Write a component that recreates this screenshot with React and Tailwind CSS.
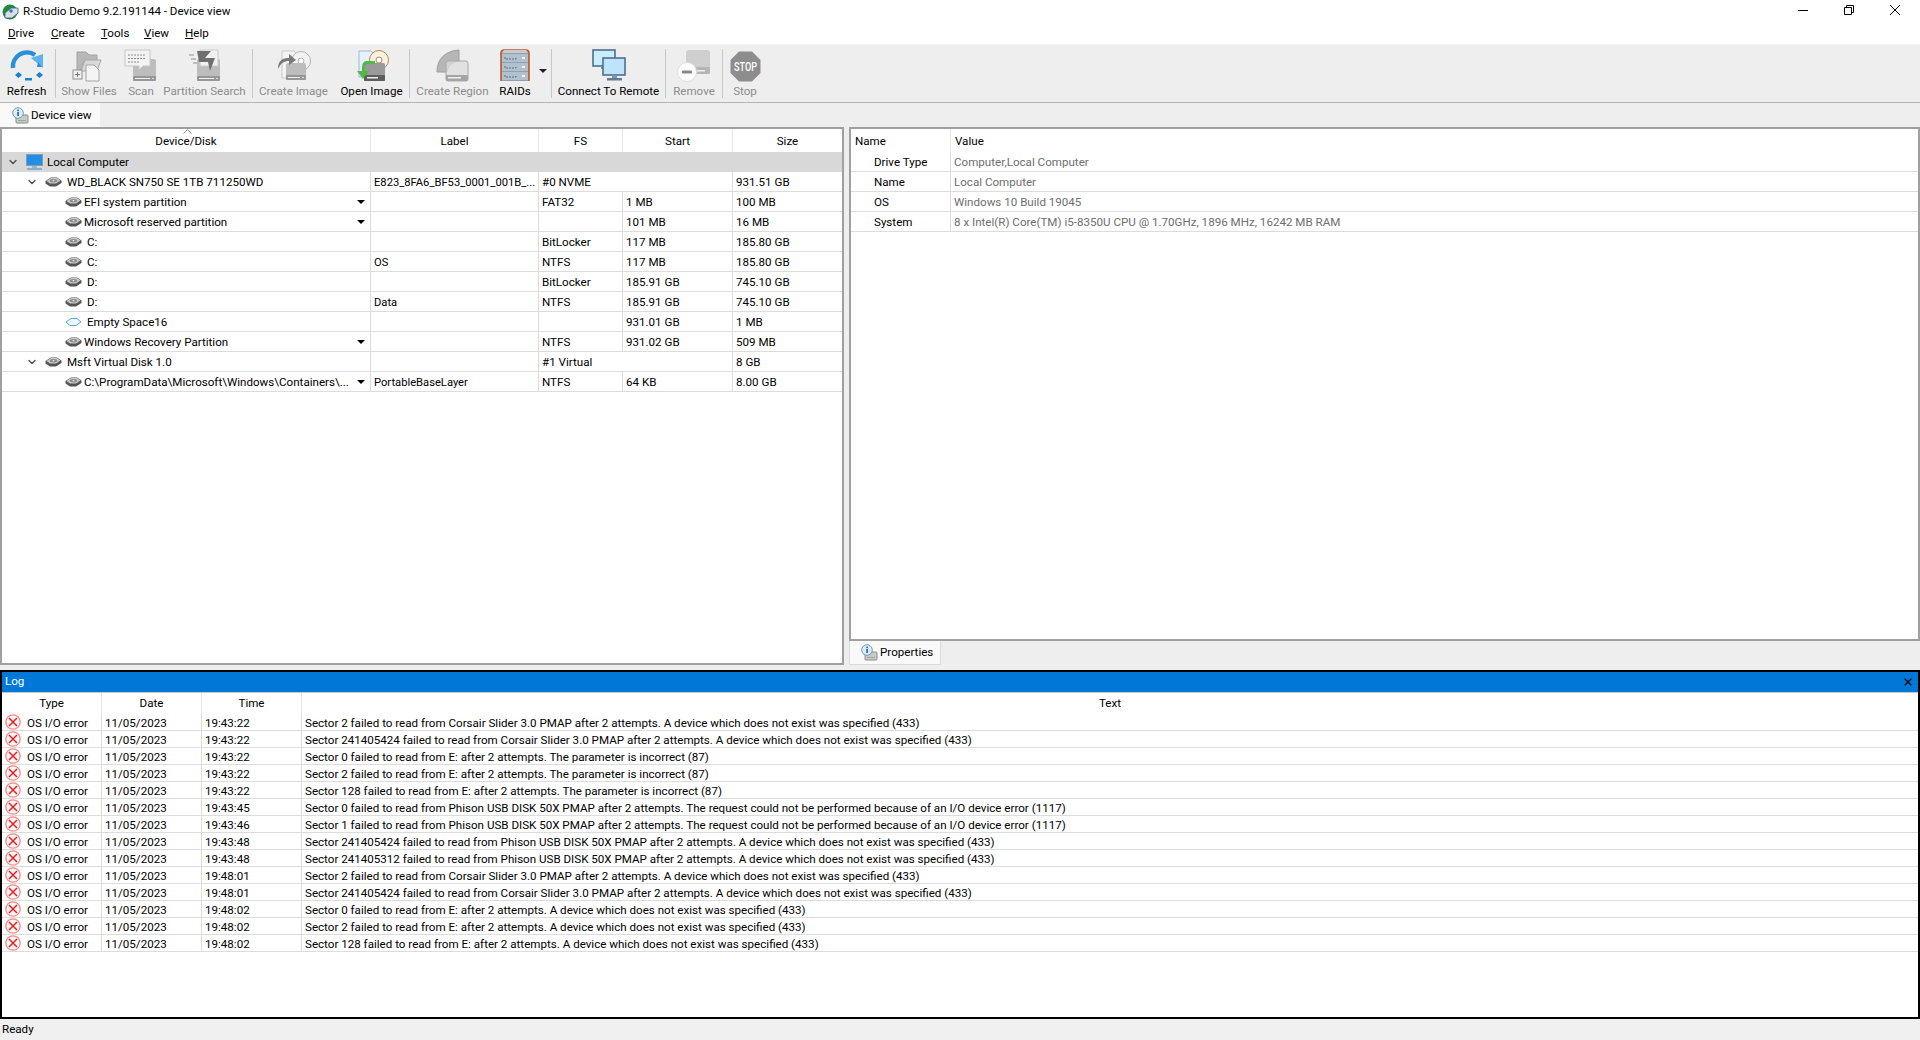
import { ChevronDown, X } from "lucide-react";

const disks = [
  { level: 1, name: "WD_BLACK SN750 SE 1TB 711250WD", label: "E823_8FA6_BF53_0001_001B_...", fs: "#0 NVME", size: "931.51 GB", span: true },
  { level: 2, name: "EFI system partition", fs: "FAT32", start: "1 MB", size: "100 MB", menu: true },
  { level: 2, name: "Microsoft reserved partition", start: "101 MB", size: "16 MB", menu: true },
  { level: 2, name: "C:", fs: "BitLocker", start: "117 MB", size: "185.80 GB", pad: true },
  { level: 2, name: "C:", label: "OS", fs: "NTFS", start: "117 MB", size: "185.80 GB", pad: true },
  { level: 2, name: "D:", fs: "BitLocker", start: "185.91 GB", size: "745.10 GB", pad: true },
  { level: 2, name: "D:", label: "Data", fs: "NTFS", start: "185.91 GB", size: "745.10 GB", pad: true },
  { level: 2, name: "Empty Space16", start: "931.01 GB", size: "1 MB", pad: true, empty: true },
  { level: 2, name: "Windows Recovery Partition", fs: "NTFS", start: "931.02 GB", size: "509 MB", menu: true },
  { level: 1, name: "Msft Virtual Disk 1.0", fs: "#1 Virtual", size: "8 GB", span: true },
  { level: 2, name: "C:\\ProgramData\\Microsoft\\Windows\\Containers\\...", label: "PortableBaseLayer", fs: "NTFS", start: "64 KB", size: "8.00 GB", menu: true },
];

const properties = [
  ["Drive Type", "Computer,Local Computer"],
  ["Name", "Local Computer"],
  ["OS", "Windows 10 Build 19045"],
  ["System", "8 x Intel(R) Core(TM) i5-8350U CPU @ 1.70GHz, 1896 MHz, 16242 MB RAM"],
];

const logRows = [
  ["19:43:22", "Sector 2 failed to read from Corsair Slider 3.0 PMAP after 2 attempts. A device which does not exist was specified (433)"],
  ["19:43:22", "Sector 241405424 failed to read from Corsair Slider 3.0 PMAP after 2 attempts. A device which does not exist was specified (433)"],
  ["19:43:22", "Sector 0 failed to read from E: after 2 attempts. The parameter is incorrect (87)"],
  ["19:43:22", "Sector 2 failed to read from E: after 2 attempts. The parameter is incorrect (87)"],
  ["19:43:22", "Sector 128 failed to read from E: after 2 attempts. The parameter is incorrect (87)"],
  ["19:43:45", "Sector 0 failed to read from Phison USB DISK 50X PMAP after 2 attempts. The request could not be performed because of an I/O device error (1117)"],
  ["19:43:46", "Sector 1 failed to read from Phison USB DISK 50X PMAP after 2 attempts. The request could not be performed because of an I/O device error (1117)"],
  ["19:43:48", "Sector 241405424 failed to read from Phison USB DISK 50X PMAP after 2 attempts. A device which does not exist was specified (433)"],
  ["19:43:48", "Sector 241405312 failed to read from Phison USB DISK 50X PMAP after 2 attempts. A device which does not exist was specified (433)"],
  ["19:48:01", "Sector 2 failed to read from Corsair Slider 3.0 PMAP after 2 attempts. A device which does not exist was specified (433)"],
  ["19:48:01", "Sector 241405424 failed to read from Corsair Slider 3.0 PMAP after 2 attempts. A device which does not exist was specified (433)"],
  ["19:48:02", "Sector 0 failed to read from E: after 2 attempts. A device which does not exist was specified (433)"],
  ["19:48:02", "Sector 2 failed to read from E: after 2 attempts. A device which does not exist was specified (433)"],
  ["19:48:02", "Sector 128 failed to read from E: after 2 attempts. A device which does not exist was specified (433)"],
];

function DiskIcon({ empty }) {
  if (empty) {
    return (
      <svg width="17" height="10" viewBox="0 0 17 10" className="shrink-0">
        <path d="M1 5 L6 1.5 H12 L16 5 L11 8.5 H5 Z" fill="#eef8ff" stroke="#5aa9e6" strokeWidth="1" />
      </svg>
    );
  }
  return (
    <svg width="17" height="10" viewBox="0 0 17 10" className="shrink-0">
      <path d="M0.5 4 L6 0.5 H12 L16.5 3.5 V6 L11 9.5 H5 L0.5 6.5 Z" fill="#555555" />
      <path d="M1.5 4 L6 1 H12 L15.5 3.5 L11 6.5 H5 Z" fill="#c9c9c9" />
      <ellipse cx="8.5" cy="3.7" rx="3.8" ry="1.7" fill="#8c8c8c" />
      <ellipse cx="8.5" cy="3.7" rx="1" ry="0.6" fill="#eeeeee" />
    </svg>
  );
}

function MonitorIcon() {
  return (
    <svg width="17" height="17" viewBox="0 0 17 17" className="shrink-0">
      <rect x="0.5" y="0.5" width="16" height="11" fill="#1e90e8" stroke="#8a9aa8" />
      <rect x="6" y="12" width="5" height="2" fill="#9db4c4" />
      <rect x="1" y="14" width="15" height="2" fill="#7fb2d8" />
    </svg>
  );
}

function ErrorIcon() {
  return (
    <svg width="16" height="16" viewBox="0 0 16 16" className="shrink-0">
      <circle cx="8" cy="8" r="7.2" fill="#fff5f5" stroke="#f08a8a" strokeWidth="1.3" />
      <path d="M4 4 L12 12 M12 4 L4 12" stroke="#e02020" strokeWidth="1.5" />
    </svg>
  );
}

function InfoTabIcon() {
  return (
    <svg width="17" height="17" viewBox="0 0 17 17" className="shrink-0">
      <rect x="4" y="8" width="12" height="8" rx="1" fill="#c8cbc8" stroke="#8b8f8b" />
      <rect x="6" y="13" width="8" height="1" fill="#8fb08f" />
      <circle cx="6" cy="6" r="5.3" fill="#dcecf8" stroke="#6d9cc4" />
      <rect x="5.2" y="5" width="1.8" height="4" fill="#3d6f9c" />
      <rect x="5.2" y="2.6" width="1.8" height="1.6" fill="#3d6f9c" />
    </svg>
  );
}

function AppIcon() {
  return (
    <svg width="17" height="16" viewBox="0 0 17 16" className="shrink-0">
      <circle cx="8" cy="8" r="7.5" fill="#1f8a3c" />
      <path d="M3 9 L9 4 H16 V9 L10 14 H3 Z" fill="#d9dfe6" stroke="#3b5f86" strokeWidth="0.8" />
      <circle cx="9" cy="7" r="1.8" fill="#3a78b8" />
    </svg>
  );
}

function BigDisk({ x = 10, y = 14, w = 22, h = 16 }) {
  return (
    <g>
      <rect x={x} y={y} width={w} height={h} rx="2" fill="#bdbdbd" />
      <rect x={x} y={y + h - 5} width={w} height="5" rx="1" fill="#979797" />
      <rect x={x + 2} y={y + h - 3} width={w - 8} height="1" fill="#eeeeee" />
      <rect x={x + w - 4} y={y + h - 3} width="2" height="1" fill="#e0e0e0" />
    </g>
  );
}

function RefreshIcon() {
  return (
    <svg width="34" height="34" viewBox="0 0 34 34">
      <path d="M3 19 A14 14 0 0 1 25 6" fill="none" stroke="#2a8fd8" strokeWidth="4.5" />
      <path d="M21 9 L33 5 L33 19 Z" fill="#5cb4ea" />
      <path d="M28 13 L32 18 L27 18 Z" fill="#2a8fd8" />
      <path d="M5 26 L8.5 23 L12 26 L8.5 29 Z M26 26 L29.5 23 L33 26 L29.5 29 Z" fill="#1783d0" />
      <rect x="15" y="29" width="7" height="2.5" fill="#1783d0" />
    </svg>
  );
}

function ShowFilesIcon() {
  return (
    <svg width="34" height="34" viewBox="0 0 34 34">
      <path d="M5 3 H14 L17 6 H25 V12 H12 L8 22 H5 Z" fill="#b8b8b8" stroke="#a2a2a2" />
      <path d="M9 22 L13 11 H29 L25 22 Z" fill="#d9d9d9" stroke="#a8a8a8" />
      <rect x="1" y="21" width="9" height="9" fill="#f1f1f1" stroke="#909090" />
      <path d="M3 25.5 H8 M5.5 23 V28" stroke="#777" />
      <path d="M14 16 H22 L27 21 V32 H14 Z" fill="#f4f4f4" stroke="#a4a4a4" />
    </svg>
  );
}

function ScanIcon() {
  return (
    <svg width="34" height="34" viewBox="0 0 34 34">
      <BigDisk x={9} y={10} w={23} h={22} />
      <path d="M1 1 H26 V17 H19 L15 21 L15 17 H1 Z" fill="#f3f3f3" stroke="#c6c6c6" />
      <path d="M4 6 H22 M4 9.5 H22 M4 13 H16" stroke="#8c8c8c" strokeDasharray="2 1" />
    </svg>
  );
}

function PartitionSearchIcon() {
  return (
    <svg width="34" height="34" viewBox="0 0 34 34">
      <BigDisk x={9} y={10} w={23} h={22} />
      <path d="M12 1 H30 V17 H12 Z" fill="#f1f1f1" stroke="#cacaca" />
      <path d="M9 2 H23 L17 9 H27 L22 22 L20 13 H11 Z" fill="#6f6f6f" />
      <path d="M1 6 H6 M3 10 H8 M5 14 H9" stroke="#8c8c8c" />
    </svg>
  );
}

function CreateImageIcon() {
  return (
    <svg width="34" height="34" viewBox="0 0 34 34">
      <path d="M5 2 H17 L20 5 V29 H5 Z" fill="#f4f4f4" stroke="#c9c9c9" />
      <circle cx="24" cy="12" r="9.5" fill="#f3f3f3" stroke="#b4b4b4" />
      <circle cx="24" cy="12" r="3" fill="#fff" stroke="#b4b4b4" />
      <BigDisk x={9} y={14} w={20} h={17} />
      <path d="M1 20 C1 11 6 9 12 9 V5 L19 11 L12 16 V12 C7 12 4 14 1 20 Z" fill="#7a7a7a" />
    </svg>
  );
}

function OpenImageIcon() {
  return (
    <svg width="34" height="34" viewBox="0 0 34 34">
      <path d="M4 2 H16 L20 6 V28 H4 Z" fill="#e7f1fb" stroke="#9bbcdc" />
      <circle cx="24" cy="11" r="9.5" fill="#f8f1e2" stroke="#b08b4f" />
      <circle cx="24" cy="11" r="3" fill="#fff" stroke="#b08b4f" />
      <rect x="9" y="14" width="21" height="18" rx="2" fill="#9a9a9a" />
      <rect x="9" y="26" width="21" height="6" rx="1" fill="#5d5d5d" />
      <rect x="12" y="28" width="11" height="1.5" fill="#eeeeee" />
      <path d="M20 12 H12 C8 12 7 15 7 20 V22 H2 L8 30 L14 22 H10 V19 C10 16 11 15 13 15 H20 Z" fill="#53b848" />
    </svg>
  );
}

function CreateRegionIcon() {
  return (
    <svg width="34" height="34" viewBox="0 0 34 34">
      <path d="M1 23 C1 10 9 2 23 1 V12 C16 13 12 17 11 23 Z" fill="#b6b6b6" stroke="#9e9e9e" />
      <rect x="10" y="12" width="22" height="20" rx="2" fill="#dcdcdc" stroke="#aaaaaa" fillOpacity="0.75" />
      <rect x="10" y="26" width="22" height="6" rx="1" fill="#a5a5a5" />
      <rect x="12" y="28" width="13" height="1.5" fill="#eeeeee" />
    </svg>
  );
}

function RaidsIcon() {
  return (
    <svg width="30" height="34" viewBox="0 0 30 34">
      <path d="M1 32 V4 Q1 1 4 1 H26 Q29 1 29 4 V32" fill="#8fa0b2" stroke="#c05a2e" strokeWidth="1.6" />
      <path d="M4 1 H26 L28 4 H2 Z" fill="#c8ccd0" />
      {[5, 14, 23].map((y) => (
        <g key={y}>
          <rect x="2" y={y} width="26" height="8" fill="#b3c1cf" />
          <path d={`M5 ${y + 3} V${y + 5} H16 V${y + 3}`} fill="none" stroke="#51657a" strokeWidth="0.9" strokeDasharray="2 1" />
          <rect x="22" y={y + 3} width="3" height="2" fill="#eef2f5" />
        </g>
      ))}
    </svg>
  );
}

function RemoteIcon() {
  return (
    <svg width="34" height="34" viewBox="0 0 34 34">
      <rect x="1" y="1" width="22" height="16" fill="#c8eeff" stroke="#4f6f8f" strokeWidth="1.6" />
      <rect x="9" y="17" width="5" height="3" fill="#7a93ab" />
      <rect x="11" y="9" width="22" height="17" fill="#bde4fb" stroke="#4f6f8f" strokeWidth="1.6" />
      <rect x="20" y="26" width="5" height="3" fill="#7a93ab" />
      <rect x="15" y="29" width="15" height="2.5" fill="#5f7c98" />
    </svg>
  );
}

function RemoveIcon() {
  return (
    <svg width="34" height="34" viewBox="0 0 34 34">
      <rect x="9" y="1" width="24" height="24" rx="3" fill="#cfcfcf" />
      <rect x="9" y="18" width="24" height="7" rx="1" fill="#b5b5b5" />
      <rect x="20" y="21" width="8" height="1.5" fill="#eeeeee" />
      <circle cx="10" cy="23" r="9.5" fill="#ffffff" stroke="#dddddd" />
      <rect x="5" y="21.5" width="10" height="3" rx="1" fill="#888888" />
    </svg>
  );
}

function StopIcon() {
  return (
    <svg width="31" height="31" viewBox="0 0 31 31" className="overflow-visible">
      <path d="M9 0.5 H22 L30.5 9 V22 L22 30.5 H9 L0.5 22 V9 Z" fill="#8d8d8d" />
      <text x="15.5" y="20" textAnchor="middle" fontSize="13" fontWeight="500" fill="#ffffff" fontFamily="Roboto, sans-serif" textLength="23" lengthAdjust="spacingAndGlyphs">STOP</text>
    </svg>
  );
}

const tools = [
  { name: "Refresh", w: "w-[55px] pr-[2px]", icon: <RefreshIcon />, on: true },
  { sep: true },
  { name: "Show Files", w: "w-[66px]", icon: <ShowFilesIcon /> },
  { name: "Scan", w: "w-[38px]", icon: <ScanIcon /> },
  { name: "Partition Search", w: "w-[92px] pr-[3px]", icon: <PartitionSearchIcon /> },
  { sep: true },
  { name: "Create Image", w: "w-[81px]", icon: <CreateImageIcon /> },
  { name: "Open Image", w: "w-[75px]", icon: <OpenImageIcon />, on: true },
  { sep: true },
  { name: "Create Region", w: "w-[85px]", icon: <CreateRegionIcon /> },
  { name: "RAIDs", w: "w-[40px]", icon: <RaidsIcon />, on: true },
  { arrow: true },
  { sep: true },
  { name: "Connect To Remote", w: "w-[113px]", icon: <RemoteIcon />, on: true },
  { sep: true },
  { name: "Remove", w: "w-[56px]", icon: <RemoveIcon /> },
  { sep: true },
  { name: "Stop", w: "w-[44px]", icon: <StopIcon /> },
];

function Toolbar() {
  return (
    <div className="flex h-[59px] items-stretch border-t border-t-[#f5f5f5] border-b border-b-[#b4b4b4] bg-[#eeeeee] pt-[4px] pb-[4px]">
      {tools.map((tool, i) => {
        if (tool.sep) return <div key={i} className="w-px shrink-0 bg-[#c8c8c8]" />;
        if (tool.arrow) {
          return (
            <div key={i} className="flex w-[16px] shrink-0 items-start justify-center pt-[20px]">
              <div className="h-0 w-0 border-x-[4px] border-t-[4px] border-x-transparent border-t-[#222222]" />
            </div>
          );
        }
        return (
          <div key={i} className={`flex shrink-0 flex-col items-center justify-between ${tool.w} ${tool.on ? "text-black" : "text-[#8c8c8c]"}`}>
            <div className="flex h-[34px] items-center justify-center">{tool.icon}</div>
            <span className="whitespace-nowrap leading-[14px]">{tool.name}</span>
          </div>
        );
      })}
    </div>
  );
}

function DiskRow({ row }) {
  const indent = row.level === 1 ? "pl-[24px]" : "pl-[63px]";
  const textPad = row.pad ? "ml-[5px]" : "ml-[2px]";
  return (
    <div className="flex h-[20px] items-center border-b border-[#dcdcdc]">
      <div className={`relative flex h-full w-[369px] shrink-0 items-center border-r border-[#dcdcdc] ${indent}`}>
        {row.level === 1 && <ChevronDown size={12} strokeWidth={2.6} className="mr-[7px] shrink-0 text-[#4a4a4a]" />}
        <DiskIcon empty={row.empty} />
        <span className={`whitespace-nowrap pt-[2px] ${row.level === 1 ? "ml-[5px]" : textPad}`}>{row.name}</span>
        {row.menu && <div className="absolute right-[5px] top-[8px] h-0 w-0 border-x-[4px] border-t-[4px] border-x-transparent border-t-black" />}
      </div>
      <div className="h-full w-[168px] shrink-0 whitespace-nowrap border-r border-[#dcdcdc] pl-[3px] text-[11.2px] leading-[21px]">{row.label}</div>
      {row.span ? (
        <div className="h-full w-[194px] shrink-0 border-r border-[#dcdcdc] pl-[3px] leading-[21px]">{row.fs}</div>
      ) : (
        <>
          <div className="h-full w-[84px] shrink-0 border-r border-[#dcdcdc] pl-[3px] leading-[21px]">{row.fs}</div>
          <div className="h-full w-[110px] shrink-0 border-r border-[#dcdcdc] pl-[3px] leading-[21px]">{row.start}</div>
        </>
      )}
      <div className="h-full flex-1 pl-[3px] leading-[21px]">{row.size}</div>
    </div>
  );
}

function DevicePanel() {
  return (
    <div className="h-[538px] w-[844px] shrink-0 border-2 border-[#a0a0a0] bg-white">
      <div className="relative flex h-[23px] items-center text-center">
        <svg width="9" height="5" viewBox="0 0 9 5" className="absolute left-[181px] top-[0px]">
          <path d="M0.5 4.5 L4.5 0.5 L8.5 4.5" fill="none" stroke="#8a8a8a" />
        </svg>
        <div className="h-full w-[369px] shrink-0 border-r border-[#e6e6e6] leading-[25px]">Device/Disk</div>
        <div className="h-full w-[168px] shrink-0 border-r border-[#e6e6e6] leading-[25px]">Label</div>
        <div className="h-full w-[84px] shrink-0 border-r border-[#e6e6e6] leading-[25px]">FS</div>
        <div className="h-full w-[110px] shrink-0 border-r border-[#e6e6e6] leading-[25px]">Start</div>
        <div className="h-full flex-1 leading-[25px]">Size</div>
      </div>
      <div className="flex h-[20px] items-center bg-[#d8d8d8] pl-[5px]">
        <ChevronDown size={12} strokeWidth={2.6} className="mr-[7px] shrink-0 text-[#4a4a4a]" />
        <MonitorIcon />
        <span className="ml-[4px] pt-[2px]">Local Computer</span>
      </div>
      {disks.map((row, i) => (
        <DiskRow key={i} row={row} />
      ))}
    </div>
  );
}

function PropertiesPanel() {
  return (
    <div className="flex h-[538px] w-[1071px] shrink-0 flex-col">
      <div className="h-[514px] border-2 border-[#a0a0a0] bg-white">
        <div className="flex h-[23px] items-stretch leading-[25px]">
          <div className="w-[100px] shrink-0 border-r border-[#e6e6e6] pl-[4px]">Name</div>
          <div className="pl-[4px]">Value</div>
        </div>
        {properties.map(([name, value]) => (
          <div key={name} className="flex h-[20px] border-b border-[#dcdcdc] leading-[21px]">
            <div className="h-full w-[100px] shrink-0 border-r border-[#dcdcdc] pl-[23px]">{name}</div>
            <div className="pl-[3px] text-[#6e6e6e]">{value}</div>
          </div>
        ))}
      </div>
      <div className="flex h-[24px] w-[92px] items-center gap-[2px] border-x border-b border-[#dcdcdc] bg-[#f9f9f9] pl-[11px]">
        <InfoTabIcon />
        <span>Properties</span>
      </div>
    </div>
  );
}

function LogPanel() {
  return (
    <div className="flex h-[349px] flex-col border-2 border-black bg-white">
      <div className="flex h-[20px] shrink-0 items-center justify-between bg-[#0078d7] pl-[3px] pr-[4px] text-white">
        <span>Log</span>
        <X size={12} strokeWidth={2.2} className="text-black" />
      </div>
      <div className="flex h-[22px] shrink-0 border-t border-[#c8c8c8] text-center leading-[21px]">
        <div className="w-[100px] shrink-0 border-r border-[#e6e6e6]">Type</div>
        <div className="w-[100px] shrink-0 border-r border-[#e6e6e6]">Date</div>
        <div className="w-[100px] shrink-0 border-r border-[#e6e6e6]">Time</div>
        <div className="flex-1">Text</div>
      </div>
      {logRows.map(([time, text], i) => (
        <div key={i} className="flex h-[17px] shrink-0 items-center border-b border-[#dcdcdc] leading-[18px]">
          <div className="flex h-full w-[100px] shrink-0 items-center gap-[6px] border-r border-[#dcdcdc] pl-[3px]">
            <ErrorIcon />
            <span className="whitespace-nowrap pt-[1px]">OS I/O error</span>
          </div>
          <div className="h-full w-[100px] shrink-0 border-r border-[#dcdcdc] pl-[3px]">11/05/2023</div>
          <div className="h-full w-[100px] shrink-0 border-r border-[#dcdcdc] pl-[3px]">{time}</div>
          <div className="h-full flex-1 whitespace-nowrap pl-[3px]">{text}</div>
        </div>
      ))}
    </div>
  );
}

export default function App() {
  return (
    <div className="flex h-[1040px] w-[1920px] flex-col overflow-hidden bg-[#eeeeee] font-['Roboto',sans-serif] text-[11.6px] text-black">
      <div className="flex h-[24px] items-center justify-between bg-white pl-[2px] pr-[2px]">
        <div className="flex items-center gap-[4px]">
          <AppIcon />
          <span>R-Studio Demo 9.2.191144 - Device view</span>
        </div>
        <div className="flex self-start">
          <div className="flex h-[20px] w-[46px] items-center justify-center">
            <svg width="10" height="10" viewBox="0 0 10 10"><path d="M0 5.5 H10" stroke="#000" /></svg>
          </div>
          <div className="flex h-[20px] w-[46px] items-center justify-center">
            <svg width="10" height="10" viewBox="0 0 10 10">
              <path d="M2.5 2.5 V0.5 H9.5 V7.5 H7.5 M0.5 2.5 H7.5 V9.5 H0.5 Z" fill="none" stroke="#000" />
            </svg>
          </div>
          <div className="flex h-[20px] w-[46px] items-center justify-center">
            <svg width="10" height="10" viewBox="0 0 10 10"><path d="M0 0 L10 10 M10 0 L0 10" stroke="#000" /></svg>
          </div>
        </div>
      </div>
      <div className="flex h-[20px] items-center bg-white pb-[1px] pl-[8px]">
        {[["D", "rive", "w-[43px]"], ["C", "reate", "w-[50px]"], ["T", "ools", "w-[43px]"], ["V", "iew", "w-[41px]"], ["H", "elp", "w-[40px]"]].map(([key, rest, w]) => (
          <span key={key} className={w}><span className="underline">{key}</span>{rest}</span>
        ))}
      </div>
      <Toolbar />
      <div className="flex h-[24px] shrink-0">
        <div className="flex h-full w-[100px] items-center gap-[2px] bg-[#f9f9f9] pl-[12px]">
          <InfoTabIcon />
          <span className="pt-[1px]">Device view</span>
        </div>
      </div>
      <div className="flex h-[543px] shrink-0 gap-[5px]">
        <DevicePanel />
        <PropertiesPanel />
      </div>
      <LogPanel />
      <div className="flex flex-1 items-center bg-[#f0f0f0] pl-[2px]">Ready</div>
    </div>
  );
}
